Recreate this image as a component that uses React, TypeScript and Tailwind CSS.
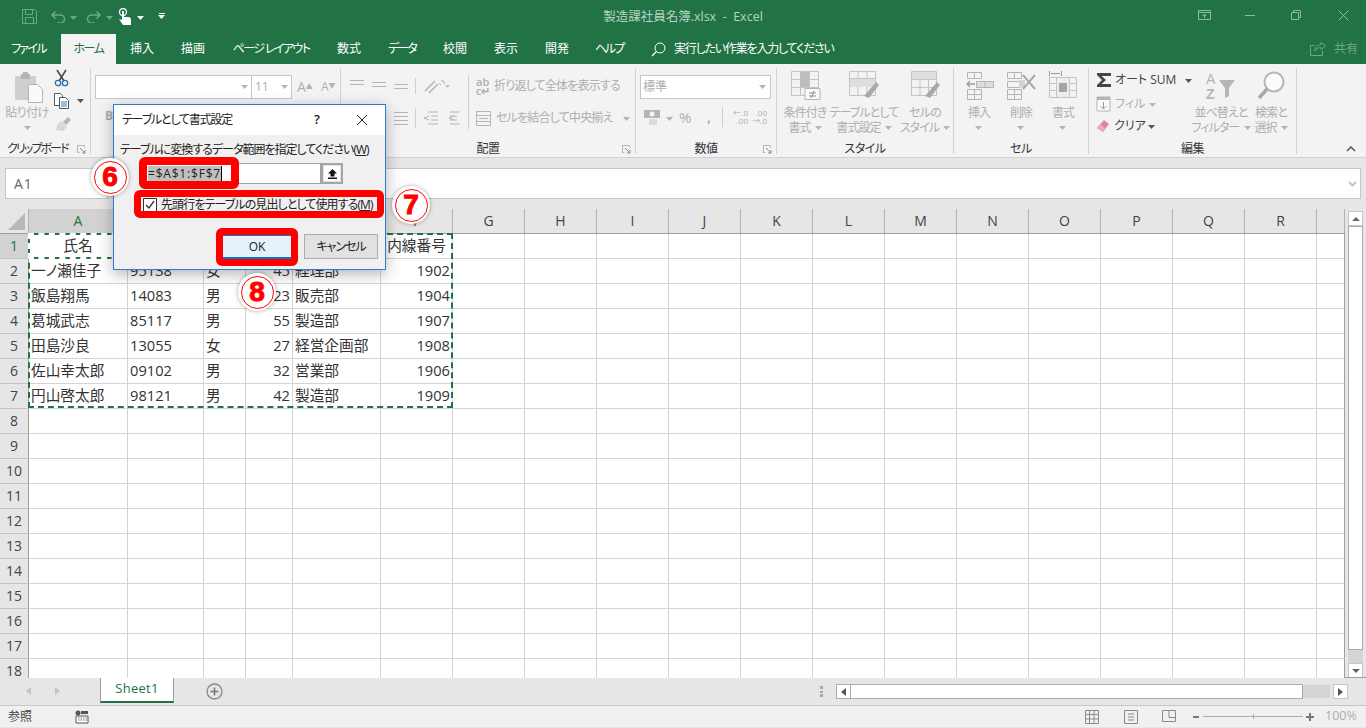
import React from "react";

const colW = [
  "w-[99px]", "w-[76px]", "w-[42px]", "w-[47px]", "w-[88px]", "w-[72px]",
  "w-[72px]", "w-[72px]", "w-[72px]", "w-[72px]", "w-[72px]", "w-[72px]",
  "w-[72px]", "w-[72px]", "w-[72px]", "w-[72px]", "w-[72px]", "w-[72px]", "w-[28px]",
];
const colNames = ["A", "B", "C", "D", "E", "F", "G", "H", "I", "J", "K", "L", "M", "N", "O", "P", "Q", "R", ""];

// the dialog hides B1:E1 in the picture
const people = [
  ["氏名", "", "", "", "", "内線番号"],
  ["一ノ瀬佳子", "95138", "女", "45", "経理部", "1902"],
  ["飯島翔馬", "14083", "男", "23", "販売部", "1904"],
  ["葛城武志", "85117", "男", "55", "製造部", "1907"],
  ["田島沙良", "13055", "女", "27", "経営企画部", "1908"],
  ["佐山幸太郎", "09102", "男", "32", "営業部", "1906"],
  ["円山啓太郎", "98121", "男", "42", "製造部", "1909"],
];

const tabs: [string, string][] = [
  ["ファイル", "w-[57px] tracking-[-1.7px]"],
  ["ホーム", "w-[55px] tracking-[-1.5px]"],
  ["挿入", "w-[52px]"],
  ["描画", "w-[50px]"],
  ["ページ レイアウト", "w-[106px] tracking-[-1.6px]"],
  ["数式", "w-[50px]"],
  ["データ", "w-[56px] tracking-[-2px]"],
  ["校閲", "w-[50px]"],
  ["表示", "w-[52px]"],
  ["開発", "w-[50px]"],
  ["ヘルプ", "w-[54px] tracking-[-2px]"],
];

function Caret({ className = "fill-[#b5b5b5]" }: { className?: string }) {
  return (
    <svg width="7" height="4" viewBox="0 0 7 4" className={className + " inline-block shrink-0"}>
      <path d="M0 0h7L3.5 4z" />
    </svg>
  );
}

function Launcher() {
  return (
    <svg width="9" height="9" viewBox="0 0 9 9" className="absolute right-[4px] top-[2px]">
      <path d="M.5 .5h7v2M.5 .5v7h2" fill="none" stroke="#b5b5b5" />
      <path d="M3 3l5 5M8 5v3H5" fill="none" stroke="#8a8a8a" />
    </svg>
  );
}

function Group({ w, label, labelClass = "text-center tracking-[-0.5px]", launcher, children }: { w: string; label: string; labelClass?: string; launcher?: boolean; children: React.ReactNode }) {
  return (
    <div className={w + " h-[86px] shrink-0 border-r border-[#d2d2d2] flex flex-col"}>
      <div className="h-[75px] overflow-visible">{children}</div>
      <div className={"relative h-[11px] leading-[12px] text-[12px] text-[#333] " + labelClass}>
        {label}
        {launcher && <Launcher />}
      </div>
    </div>
  );
}

function Lines({ ws }: { ws: number[] }) {
  return (
    <svg width="16" height="16" viewBox="0 0 16 16" className="shrink-0">
      {ws.map((x, i) => (
        <path key={i} d={`M1 ${2.5 + i * 4}h${x}`} stroke="#b5b5b5" fill="none" />
      ))}
    </svg>
  );
}

function BigButton({ w, lines, caretLine, children }: { w: string; lines: string[]; caretLine?: boolean; children: React.ReactNode }) {
  return (
    <div className={w + " shrink-0 flex flex-col items-center"}>
      <div className="h-[33px] flex items-end">{children}</div>
      <div className="mt-[4px] text-[12px] leading-[15px] text-[#aeaeae] text-center whitespace-nowrap tracking-[-0.9px]">
        <div>{lines[0]}</div>
        {caretLine ? (
          <div className="flex items-center justify-center gap-[4px]">
            {lines[1]}
            <Caret />
          </div>
        ) : (
          <div className="h-[15px] flex items-center justify-center">
            <Caret />
          </div>
        )}
      </div>
    </div>
  );
}

function GridIcon({ children }: { children: React.ReactNode }) {
  return (
    <svg width="32" height="32" viewBox="0 0 32 32" fill="none">
      {children}
    </svg>
  );
}

function Ribbon() {
  return (
    <div className="h-[94px] shrink-0 bg-[#f3f3f3] border-b border-[#d2d2d2] pt-[4px] flex">
      <Group w="w-[91px]" label="クリップボード" labelClass="pl-[7px] tracking-[-1.9px]" launcher>
        <div className="flex">
          <div className="w-[54px] flex flex-col items-center">
            <svg width="30" height="32" viewBox="0 0 30 32" className="mt-[3px] ml-[4px]">
              <path d="M1 5h21v24H1z" fill="#cfcfcf" />
              <path d="M7 3h9v5H7z" fill="#b5b5b5" />
              <path d="M9 1h5v3H9z" fill="#b5b5b5" />
              <path d="M14.500 13.500h9l5 5v13h-14z" fill="#fafafa" stroke="#b5b5b5" />
            </svg>
            <div className="mt-[2px] text-[12px] leading-[15px] text-[#aeaeae] whitespace-nowrap tracking-[-0.6px]">貼り付け</div>
            <div className="h-[15px] flex items-center"><Caret /></div>
          </div>
          <div className="flex flex-col pt-[1px]">
            <svg width="16" height="18" viewBox="0 0 16 18" fill="none">
              <path d="M3 1l7 11M12 1L5 12" stroke="#444" strokeWidth="1.500" />
              <circle cx="4" cy="14" r="2.700" stroke="#2a6fb0" strokeWidth="1.300" />
              <circle cx="11" cy="14" r="2.700" stroke="#2a6fb0" strokeWidth="1.300" />
            </svg>
            <div className="mt-[6px] flex items-center gap-[7px]">
              <svg width="16" height="16" viewBox="0 0 16 16" fill="none">
                <path d="M.5 .5h6l2 2v10h-8z" fill="#fff" stroke="#555" />
                <path d="M5.500 4.500h6l3 3v8h-9z" fill="#fff" stroke="#555" />
                <path d="M7 9h6M7 11h6M7 13h6" stroke="#3d7fb8" />
              </svg>
              <Caret className="fill-[#555]" />
            </div>
            <svg width="17" height="15" viewBox="0 0 17 15" className="mt-[8px]">
              <path d="M9 5l5-5 3 3-5 5z" fill="#b5b5b5" />
              <path d="M7 4l6 6-4 4-7-1 1-5z" fill="#d8d8d8" />
            </svg>
          </div>
        </div>
      </Group>

      {/* group label sits under the dialog, so it is left out */}
      <Group w="w-[250px]" label="" launcher>
        <div className="pl-[4px] pt-[7px]">
          <div className="flex items-center">
            <div className="w-[157px] h-[24px] bg-white border border-[#c6c6c6] flex items-center justify-end pr-[3px]"><Caret /></div>
            <div className="w-[40px] h-[24px] bg-white border border-[#c6c6c6] border-l-0 flex items-center justify-between pl-[3px] pr-[3px] text-[12px] text-[#aeaeae]">
              11<Caret />
            </div>
            <div className="ml-[5px] w-[24px] text-[14px] text-[#b0b0b0] leading-none">A<sup className="text-[7px]">▲</sup></div>
            <div className="w-[18px] text-[12px] text-[#b0b0b0] leading-none">A<sup className="text-[7px]">▼</sup></div>
          </div>
          <div className="pl-[10px] mt-[9px] text-[12px] font-bold text-[#aeaeae] leading-[16px]">B</div>
        </div>
      </Group>

      <Group w="w-[295px]" label="配置" launcher>
        <div className="flex pt-[6px] pl-[8px]">
          <div className="flex flex-col gap-[8px]">
            <div className="h-[24px] flex items-center gap-[6px]">
              <Lines ws={[14, 14]} />
              <div className="mt-[4px]"><Lines ws={[14, 14]} /></div>
              <div className="mt-[8px]"><Lines ws={[14, 14]} /></div>
              <div className="w-px h-[16px] bg-[#cfcfcf]" />
              <svg width="28" height="16" viewBox="0 0 28 16" fill="none" className="ml-px">
                <path d="M2 13L12 3M6 15l9-9" stroke="#b5b5b5" strokeWidth="1.500" />
                <path d="M16 5l2 2M18 3h3v3" stroke="#b5b5b5" />
                <path d="M22 7h5l-2.500 3z" fill="#c4c4c4" />
              </svg>
            </div>
            <div className="h-[24px] flex items-center gap-[6px]">
              <Lines ws={[14, 14, 14, 14]} />
              <Lines ws={[14, 14, 14, 14]} />
              <Lines ws={[14, 14, 14, 14]} />
              <div className="w-px h-[20px] bg-[#cfcfcf]" />
              <svg width="38" height="16" viewBox="0 0 38 16" fill="none" className="ml-px">
                <path d="M5 2h10M8 6h7M8 10h7M5 14h10M6 6L1 8l5 2" stroke="#b5b5b5" />
                <path d="M27 2h10M27 6h7M27 10h7M27 14h10M31 6l-5 2 5 2" stroke="#b5b5b5" />
              </svg>
            </div>
          </div>
          <div className="w-px h-[54px] bg-[#cfcfcf] ml-[7px] mt-[1px]" />
          <div className="pl-[7px] flex flex-col gap-[8px] text-[12px] text-[#aeaeae] whitespace-nowrap tracking-[-0.8px]">
            <div className="h-[24px] flex items-center gap-[4px]">
              <div className="w-[14px] text-[11px] leading-[9px] font-semibold tracking-normal">ab<br />c↵</div>
              折り返して全体を表示する
            </div>
            <div className="h-[24px] flex items-center gap-[5px]">
              <svg width="15" height="15" viewBox="0 0 15 15" fill="none">
                <path d="M.5 .5h14v14H.5zM.5 4.500h14M.5 10.500h14M3 7.500h9" stroke="#b5b5b5" />
              </svg>
              セルを結合して中央揃え
              <div className="ml-[5px]"><Caret /></div>
            </div>
          </div>
        </div>
      </Group>

      <Group w="w-[141px]" label="数値" launcher>
        <div className="pl-[4px] pt-[7px]">
          <div className="w-[131px] h-[24px] bg-white border border-[#c6c6c6] flex items-center justify-between pl-[2px] pr-[4px] text-[12px] text-[#aeaeae]">
            標準<Caret />
          </div>
          <div className="mt-[6px] h-[24px] pl-[3px] flex items-center text-[#aeaeae]">
            <svg width="18" height="16" viewBox="0 0 18 16">
              <path d="M1 1h16v8H1z" fill="#b5b5b5" />
              <circle cx="9" cy="5" r="2.500" fill="#f3f3f3" />
              <path d="M6 11h8M6 13h8M6 15h8" stroke="#c4c4c4" />
            </svg>
            <div className="ml-[5px]"><Caret /></div>
            <div className="ml-[6px] w-[16px] text-[15px]">%</div>
            <div className="ml-[12px] w-[12px] text-[14px] font-bold leading-[14px]">,</div>
            <div className="w-px h-[20px] bg-[#cfcfcf] ml-[3px]" />
            <div className="ml-[10px] text-[8px] leading-[8px] text-right w-[15px]">←.0<br />.00</div>
            <div className="ml-[4px] text-[8px] leading-[8px] text-right w-[15px]">.00<br />→.0</div>
          </div>
        </div>
      </Group>

      <Group w="w-[177px]" label="スタイル">
        <div className="flex pl-[1px]">
          <BigButton w="w-[54px]" lines={["条件付き", "書式"]} caretLine>
            <GridIcon>
              <path d="M2.500 2.500h27v24h-27zM2.500 10.500h27M2.500 18.500h27M11.500 2.500v24M20.500 2.500v24" stroke="#c4c4c4" />
              <path d="M11 3h9v15h-9z" fill="#bdbdbd" />
              <path d="M16 19.500h15v11H16z" fill="#fafafa" stroke="#b5b5b5" />
              <path d="M20 24h7M20 27h7M25 22l-3 7" stroke="#8f8f8f" />
            </GridIcon>
          </BigButton>
          <BigButton w="w-[64px]" lines={["テーブルとして", "書式設定"]} caretLine>
            <GridIcon>
              <path d="M1.500 2.500h26v24h-26zM1.500 9.500h26M1.500 16.500h26M10 2.500v24M19 2.500v24" stroke="#c4c4c4" />
              <path d="M2 10h25v8H2z" fill="#dedede" />
              <path d="M16 27l12-14 3 3-10 13z" fill="#a9a9a9" />
            </GridIcon>
          </BigButton>
          <BigButton w="w-[58px]" lines={["セルの", "スタイル"]} caretLine>
            <GridIcon>
              <path d="M2.500 2.500h25v24h-25zM2.500 10.500h25M2.500 18.500h25M11 2.500v24M19.500 2.500v24" stroke="#c4c4c4" />
              <path d="M3 3h24v7H3z" fill="#dedede" />
              <path d="M16 27l12-14 3 3-10 13z" fill="#a9a9a9" />
            </GridIcon>
          </BigButton>
        </div>
      </Group>

      <Group w="w-[135px]" label="セル">
        <div className="flex pl-[4px]">
          <BigButton w="w-[42px]" lines={["挿入"]}>
            <GridIcon>
              <path d="M4.500 3.500h14v6h-14zM11.500 3.500v6M4.500 20.500h14v10h-14zM4.500 25.500h14M11.500 20.500v10" stroke="#b5b5b5" />
              <path d="M13.500 12.500h17v6h-17zM22 12.500v6" fill="#dedede" stroke="#b5b5b5" />
              <path d="M4 15h8M7 12l-3 3 3 3" stroke="#9a9a9a" strokeWidth="1.300" />
            </GridIcon>
          </BigButton>
          <BigButton w="w-[42px]" lines={["削除"]}>
            <GridIcon>
              <path d="M2.500 3.500h14v6h-14zM9.500 3.500v6M2.500 20.500h14v10h-14zM2.500 25.500h14M9.500 20.500v10M2.500 12.500h16v6h-16z" stroke="#b5b5b5" />
              <path d="M14 11h6v8h-6z" fill="#d4d4d4" />
              <path d="M18 6l12 14M30 6L18 20" stroke="#a9a9a9" strokeWidth="2" />
            </GridIcon>
          </BigButton>
          <BigButton w="w-[42px]" lines={["書式"]}>
            <GridIcon>
              <path d="M2.500 8.500h27v20h-27zM2.500 14.500h27M2.500 21.500h27M9.500 8.500v20M22.500 8.500v20" stroke="#c4c4c4" />
              <path d="M10 9h12v19H10z" fill="#ededed" />
              <path d="M12 14h8v9h-8z" fill="#a5a5a5" />
              <path d="M2.500 2v5M14.500 2v5M4 4.500h9" stroke="#9a9a9a" />
            </GridIcon>
          </BigButton>
        </div>
      </Group>

      <Group w="w-[208px]" label="編集">
        <div className="flex pl-[7px]">
          <div className="w-[98px] shrink-0 text-[12px]">
            <div className="h-[22px] mt-px flex items-center">
              <svg width="16" height="16" viewBox="0 0 16 16" className="shrink-0">
                <path d="M1 1h14v3H5.500L10 8l-4.500 4H15v3H1v-2l5-5-5-5z" fill="#444" />
              </svg>
              <span className="ml-[3px] text-[#444] whitespace-nowrap">オート SUM</span>
              <div className="ml-[9px]"><Caret className="fill-[#555]" /></div>
            </div>
            <div className="mt-[2px] h-[22px] flex items-center text-[#aeaeae]">
              <svg width="15" height="16" viewBox="0 0 15 16">
                <path d="M1 1h13v14H1z" fill="#fafafa" stroke="#b5b5b5" />
                <path d="M1 1h13v3H1z" fill="#b5b5b5" />
                <path d="M7.500 6v7M4.500 10l3 3 3-3" stroke="#9a9a9a" fill="none" />
              </svg>
              <span className="ml-[4px]">フィル</span>
              <div className="ml-[4px]"><Caret /></div>
            </div>
            <div className="h-[22px] flex items-center text-[#444]">
              <svg width="14" height="14" viewBox="0 0 14 14">
                <path d="M8 1l5 4-6 8-6-4z" fill="#e78295" />
                <path d="M1 9l3-4 5 4-2 4z" fill="#f0a9b6" />
              </svg>
              <span className="ml-[4px]">クリア</span>
              <div className="ml-[2px]"><Caret className="fill-[#555]" /></div>
            </div>
          </div>
          <BigButton w="w-[54px]" lines={["並べ替えと", "フィルター"]} caretLine>
            <svg width="32" height="30" viewBox="0 0 32 30">
              <text x="1" y="13" fontSize="14" fill="#b5b5b5" fontFamily="Liberation Sans">A</text>
              <text x="1" y="28" fontSize="14" fontWeight="bold" fill="#b5b5b5" fontFamily="Liberation Sans">Z</text>
              <path d="M14 9h16l-6 8v8l-4 2V17z" fill="#b5b5b5" />
            </svg>
          </BigButton>
          <BigButton w="w-[46px]" lines={["検索と", "選択"]} caretLine>
            <svg width="30" height="30" viewBox="0 0 30 30" fill="none">
              <circle cx="18" cy="11" r="9.500" stroke="#b5b5b5" strokeWidth="2" fill="#fbfbfb" />
              <path d="M11 18L3 27" stroke="#a9a9a9" strokeWidth="3.500" />
            </svg>
          </BigButton>
        </div>
      </Group>

      <div className="flex-1 relative">
        <svg width="10" height="6" viewBox="0 0 10 6" className="absolute right-[10px] top-[78px]" fill="none">
          <path d="M1 5l4-4 4 4" stroke="#555" strokeWidth="1.500" />
        </svg>
      </div>
    </div>
  );
}

function Sheet() {
  const rows = Array.from({ length: 18 }, (_, i) => i);
  return (
    <div className="flex-1 min-w-0 overflow-hidden relative">
      {/* column headers */}
      <div className="flex h-[25px] border-b border-[#9f9f9f]">
        <div className="w-[29px] shrink-0 bg-[#e6e6e6] border-r border-[#b1b1b1] flex items-end justify-end p-[3px]">
          <svg width="17" height="17" viewBox="0 0 17 17"><path d="M17 0v17H0z" fill="#b8b8b8" /></svg>
        </div>
        {colNames.map((c, i) => (
          <div
            key={i}
            className={colW[i] + " shrink-0 border-r border-[#b1b1b1] text-center text-[14px] leading-[24px] " + (i === 0 ? "bg-[#d2d2d2] text-[#217346]" : "bg-[#e6e6e6] text-[#444]")}
          >
            {c}
          </div>
        ))}
      </div>
      {rows.map((r) => (
        <div key={r} className="flex h-[25px]">
          <div className={"w-[29px] shrink-0 border-r border-b border-r-[#9f9f9f] border-b-[#c6c6c6] text-center text-[14px] leading-[24px] " + (r === 0 ? "bg-[#d2d2d2] text-[#217346]" : "bg-[#e6e6e6] text-[#444]")}>
            {r + 1}
          </div>
          {colW.map((w, c) => {
            const text = people[r]?.[c] ?? "";
            const align = r === 0 ? "text-center" : c === 3 || c === 5 ? "text-right" : "text-left";
            return (
              <div key={c} className={w + " shrink-0 bg-white border-r border-b border-[#d4d4d4] pl-[2px] pr-[2px] text-[14.670px] leading-[22px] text-[#333] whitespace-nowrap overflow-hidden [font-feature-settings:'normal'] " + align + (c === 18 ? " border-r-[#9f9f9f]" : "")}>
                {text}
              </div>
            );
          })}
        </div>
      ))}
      {/* copy range outline */}
      <div className="absolute left-[28px] top-[24px] w-[425px] h-[175px] border-2 border-dashed border-[#217346] pointer-events-none" />
      <div className="absolute left-[28px] top-[24px] w-[100px] h-[26px] border-2 border-[#217346] pointer-events-none">
        <div className="absolute -inset-[2px] border-2 border-dashed border-white" />
      </div>
    </div>
  );
}

function Marker({ n, pos }: { n: string; pos: string }) {
  return (
    <div className={"absolute z-20 w-[38px] h-[38px] rounded-full bg-white shadow-[0_0_4px_rgba(0,0,0,0.35)] flex items-center justify-center " + pos}>
      <div className="w-[33px] h-[33px] rounded-full border-[1.5px] border-[#ff0000] flex items-center justify-center font-['Liberation_Sans',sans-serif] font-bold text-[28px] leading-none text-[#ff0000] [-webkit-text-stroke:1px_#ff0000]">
        {n}
      </div>
    </div>
  );
}

function Dialog() {
  return (
    <div className="absolute z-10 left-[113px] top-[104px] w-[273px] h-[166px] border border-[#2b7cd3] bg-[#f0f0f0] shadow-[0_4px_14px_rgba(0,0,0,0.3)]">
      <div className="h-[30px] bg-white flex items-center text-[12px] text-[#222]">
        <span className="ml-[8px] flex-1 tracking-[-1.2px]">テーブルとして書式設定</span>
        <span className="mr-[36px] font-semibold text-[13px]">?</span>
        <svg width="12" height="12" viewBox="0 0 12 12" className="mr-[17px]" fill="none">
          <path d="M1 1l10 10M11 1L1 11" stroke="#222" />
        </svg>
      </div>
      <div className="pl-[6px] pt-[8px] text-[12px] text-[#222]">
        <div className="h-[14px] leading-[14px] whitespace-nowrap tracking-[-1px]">
          テーブルに変換するデータ範囲を指定してください(<span className="underline">W</span>)
        </div>
        <div className="mt-[6px] ml-[19px] flex">
          <div className="w-[182px] h-[21px] bg-white border border-[#a0a0a0] flex items-center pl-[8px]">
            <span className="bg-[#c0c0c0] leading-[15px] text-[12px] text-[#222] tracking-[0.8px] border-r border-black">=$A$1:$F$7</span>
          </div>
          <div className="w-[22px] h-[21px] bg-[#e1e1e1] border-2 border-[#a6a6a6] flex items-center justify-center">
            <div className="w-[16px] h-[15px] bg-white flex items-center justify-center">
              <svg width="9" height="10" viewBox="0 0 9 10">
                <path d="M4.500 0L9 4.500H6.500V7.500h-4V4.500H0zM0 8.500h9V10H0z" fill="#111" />
              </svg>
            </div>
          </div>
        </div>
        <div className="mt-[13px] ml-[23px] h-[15px] flex items-center whitespace-nowrap tracking-[-0.9px]">
          <svg width="14" height="14" viewBox="0 0 14 14" fill="none" className="shrink-0 mr-[4px]">
            <path d="M.5 .5h13v13H.5z" fill="#fff" stroke="#333" />
            <path d="M3 7l3 3 5-7" stroke="#333" strokeWidth="1.300" />
          </svg>
          先頭行をテーブルの見出しとして使用する(<span className="underline">M</span>)
        </div>
        <div className="mt-[22px] flex text-[12px]">
          <div className="ml-[101px] w-[72px] h-[25px] bg-[#e5f1fb] border-2 border-[#0078d7] flex items-center justify-center">OK</div>
          <div className="ml-[11px] w-[74px] h-[25px] bg-[#e1e1e1] border border-[#adadad] flex items-center justify-center tracking-[-1px]">キャンセル</div>
        </div>
      </div>
    </div>
  );
}

export default function App() {
  return (
    <div className="relative w-[1366px] h-[728px] overflow-hidden flex flex-col bg-[#e6e6e6] font-['Open_Sans','Noto_Sans_CJK_JP',sans-serif] [font-feature-settings:'palt']">
      {/* title bar */}
      <div className="h-[34px] shrink-0 bg-[#217346] flex items-center relative">
        <div className="pl-[22px] flex items-center -mt-[2px]">
          <svg width="15" height="15" viewBox="0 0 15 15" fill="none">
            <path d="M.5 .5h12l2 2v12H.5z" stroke="#6ea588" />
            <path d="M3.500 .5v5h7v-5M3.500 14.500v-6h8v6" stroke="#6ea588" />
          </svg>
          <svg width="15" height="13" viewBox="0 0 15 13" fill="none" className="ml-[14px]">
            <path d="M1 5h8.500a4 4 0 010 8H6M4.500 1.500L1 5l3.500 3.500" stroke="#6ea588" strokeWidth="1.500" />
          </svg>
          <div className="ml-[4px]"><Caret className="fill-[#6ea588]" /></div>
          <svg width="15" height="13" viewBox="0 0 15 13" fill="none" className="ml-[9px]">
            <path d="M14 5H5.500a4 4 0 000 8H9M10.500 1.500L14 5l-3.500 3.500" stroke="#6ea588" strokeWidth="1.500" />
          </svg>
          <div className="ml-[5px]"><Caret className="fill-[#6ea588]" /></div>
          <svg width="14" height="17" viewBox="0 0 14 17" className="ml-[5px]">
            <circle cx="5" cy="4" r="3.500" fill="none" stroke="#fff" strokeWidth="1.300" />
            <path d="M4 3h2v6h4a3 3 0 013 3v5H5L1 11l3 1z" fill="#fff" />
          </svg>
          <div className="ml-[5px]"><Caret className="fill-white" /></div>
          <div className="ml-[14px] flex flex-col items-center gap-[1px]">
            <div className="w-[6px] h-px bg-white" />
            <Caret className="fill-white" />
          </div>
        </div>
        <div className="absolute inset-x-0 top-[8px] text-center text-[12.500px] leading-[17px] text-[#b9d2c4] pointer-events-none">
          製造課社員名簿.xlsx&nbsp; -&nbsp; Excel
        </div>
        <div className="ml-auto flex items-center pr-[17px] -mt-[4px]">
          <svg width="13" height="10" viewBox="0 0 13 10" fill="none" className="mr-[34px]">
            <path d="M.5 .5h12v9H.5zM.5 2.500h12M6.500 8V4.500M4.500 6l2-2 2 2" stroke="#8fb9a3" />
          </svg>
          <div className="w-[10px] h-px bg-[#8fb9a3] mr-[36px]" />
          <svg width="10" height="10" viewBox="0 0 10 10" fill="none" className="mr-[37px]">
            <path d="M.5 2.500h7v7h-7zM2.500 2.500v-2h7v7h-2" stroke="#8fb9a3" />
          </svg>
          <svg width="11" height="11" viewBox="0 0 11 11" fill="none">
            <path d="M.5 .5l10 10M10.500 .5l-10 10" stroke="#8fb9a3" />
          </svg>
        </div>
      </div>

      {/* tabs */}
      <div className="h-[30px] shrink-0 bg-[#217346] flex items-stretch text-[12px] text-white">
        {tabs.map(([t, w], i) => (
          <div key={t} className={w + " flex items-center justify-center whitespace-nowrap " + (t === "ホーム" ? "bg-[#f3f3f3] text-[#217346]" : "") + (i === 0 ? " mr-[4px]" : "")}>
            {t}
          </div>
        ))}
        <div className="ml-[15px] flex items-center">
          <svg width="15" height="15" viewBox="0 0 15 15" fill="none">
            <circle cx="9" cy="6" r="5" stroke="#fff" />
            <path d="M5.500 9.500L1 14" stroke="#fff" strokeWidth="1.300" />
          </svg>
          <span className="ml-[8px] whitespace-nowrap tracking-[-1.2px]">実行したい作業を入力してください</span>
        </div>
        <div className="ml-auto mr-[8px] flex items-center text-[#6ea588]">
          <svg width="16" height="14" viewBox="0 0 16 14" fill="none" className="mr-[8px]">
            <path d="M11 .5l4.500 3.500L11 7.500V5.500c-3 0-5 1-6 3.500 0-4 2-6 6-6.500zM12.500 9v4.500H.5V3.500h4" stroke="#6ea588" />
          </svg>
          共有
        </div>
      </div>

      <Ribbon />

      {/* formula bar */}
      <div className="h-[51px] shrink-0 bg-[#e6e6e6] pl-[5px] pr-[5px] pt-[10px] flex">
        <div className="w-[103px] h-[31px] bg-white border border-[#c6c6c6] pl-[8px] text-[14px] leading-[29px] tracking-[1px] text-[#666]">A1</div>
        <div className="ml-[60px] flex-1 h-[31px] bg-white border border-[#c6c6c6] flex items-center justify-end pr-[3px]">
          <svg width="9" height="6" viewBox="0 0 9 6" fill="none">
            <path d="M1 1l3.500 3.500L8 1" stroke="#c4c4c4" strokeWidth="2" />
          </svg>
        </div>
      </div>

      {/* sheet + vertical scrollbar */}
      <div className="h-[469px] shrink-0 flex">
        <Sheet />
        <div className="w-[21px] shrink-0 bg-[#e6e6e6] pl-[3px] pr-[3px] pt-[2px] flex flex-col">
          <div className="w-[15px] h-[15px] bg-white border border-[#c6c6c6] flex items-center justify-center">
            <svg width="8" height="4" viewBox="0 0 8 4"><path d="M0 4h8L4 0z" fill="#666" /></svg>
          </div>
          <div className="w-[15px] h-[424px] bg-white border border-[#ababab]" />
          <div className="flex-1 bg-[#d5d5d5] w-[15px]" />
          <div className="w-[15px] h-[15px] bg-white border border-[#c6c6c6] flex items-center justify-center">
            <svg width="8" height="4" viewBox="0 0 8 4"><path d="M0 0h8L4 4z" fill="#666" /></svg>
          </div>
        </div>
      </div>

      {/* sheet tabs */}
      <div className="h-[28px] shrink-0 bg-[#e6e6e6] border-t border-[#9f9f9f] flex items-start -mt-px">
        <div className="w-[100px] h-[26px] flex items-center pl-[26px] gap-[22px]">
          <svg width="6" height="8" viewBox="0 0 6 8"><path d="M5 0v8L0 4z" fill="#c4c4c4" /></svg>
          <svg width="6" height="8" viewBox="0 0 6 8"><path d="M1 0v8l5-4z" fill="#c4c4c4" /></svg>
        </div>
        <div className="-mt-px w-[74px] h-[26px] bg-white border-x border-[#9f9f9f] border-b-2 border-b-[#217346] flex items-center justify-center text-[13px] tracking-[0.3px] text-[#217346]">Sheet1</div>
        <svg width="17" height="17" viewBox="0 0 17 17" fill="none" className="ml-[32px] mt-[5px]">
          <circle cx="8.500" cy="8.500" r="7.500" stroke="#8a8a8a" strokeWidth="1.300" />
          <path d="M8.500 4.500v8M4.500 8.500h8" stroke="#777" strokeWidth="1.600" />
        </svg>
        <div className="ml-[597px] mt-[8px] w-[3px] h-[11px] border-y-[3px] border-[#aaa] bg-[linear-gradient(#e6e6e6_30%,#aaa_30%,#aaa_70%,#e6e6e6_70%)]" />
        <div className="ml-[13px] mt-[6px] flex h-[15px]">
          <div className="w-[15px] bg-white border border-[#ababab] flex items-center justify-center">
            <svg width="5" height="8" viewBox="0 0 5 8"><path d="M5 0v8L0 4z" fill="#555" /></svg>
          </div>
          <div className="w-[452px] bg-white border-y border-r border-[#ababab]" />
          <div className="w-[27px] bg-[#d5d5d5] border-y border-[#e6e6e6]" />
          <div className="ml-[3px] w-[15px] bg-white border border-[#c6c6c6] flex items-center justify-center">
            <svg width="5" height="8" viewBox="0 0 5 8"><path d="M0 0v8l5-4z" fill="#555" /></svg>
          </div>
        </div>
      </div>

      {/* status bar */}
      <div className="h-[22px] shrink-0 bg-[#f0f0f0] border-t border-[#c6c6c6] flex items-center text-[12px] text-[#444] pl-[8px]">
        <span>参照</span>
        <svg width="14" height="14" viewBox="0 0 14 14" className="ml-[43px]" fill="none">
          <circle cx="3" cy="3" r="2.500" fill="#555" />
          <path d="M1 6h12v7H1z" fill="#fff" stroke="#555" />
          <path d="M6 1h7v3H6z" fill="#555" />
          <path d="M3 8h9M3 10h9" stroke="#777" strokeDasharray="1.500 1" />
        </svg>
        <svg width="14" height="14" viewBox="0 0 14 14" fill="none" className="ml-[996px]">
          <path d="M.5 .5h13v13H.5zM.5 4.500h13M.5 9h13M4.500 .5v13M9 .5v13" stroke="#8a8a8a" />
        </svg>
        <svg width="14" height="14" viewBox="0 0 14 14" fill="none" className="ml-[25px]">
          <path d="M.5 .5h13v13H.5z" stroke="#8a8a8a" />
          <path d="M4 4h6M4 7h6M4 10h6" stroke="#8a8a8a" />
        </svg>
        <svg width="14" height="14" viewBox="0 0 14 14" fill="none" className="ml-[24px]">
          <path d="M.5 .5h13v11H.5zM7 .5v7h6.500" stroke="#8a8a8a" />
        </svg>
        <div className="ml-[17px] w-[6px] h-[2px] bg-[#777]" />
        <div className="ml-[4px] w-[100px] h-px bg-[#aaa] flex justify-center items-center">
          <div className="w-px h-[5px] bg-[#aaa]" />
        </div>
        <svg width="8" height="8" viewBox="0 0 8 8" className="ml-[3px]">
          <path d="M3 0h2v3h3v2H5v3H3V5H0V3h3z" fill="#777" />
        </svg>
        <span className="ml-[11px] text-[#aeaeae] text-[12.500px]">100%</span>
      </div>

      <Dialog />

      {/* red annotation frames */}
      <div className="absolute z-20 left-[139px] top-[157px] w-[100px] h-[32px] border-[8px] border-[#ff0000] rounded-[6px] pointer-events-none" />
      <div className="absolute z-20 left-[134px] top-[190px] w-[250px] h-[28px] border-[7px] border-[#ff0000] rounded-[6px] pointer-events-none" />
      <div className="absolute z-20 left-[216px] top-[228px] w-[82px] h-[38px] border-[7px] border-[#ff0000] rounded-[6px] pointer-events-none" />

      <Marker n="6" pos="left-[91px] top-[158px]" />
      <Marker n="7" pos="left-[392px] top-[186px]" />
      <Marker n="8" pos="left-[238px] top-[273px]" />
    </div>
  );
}
